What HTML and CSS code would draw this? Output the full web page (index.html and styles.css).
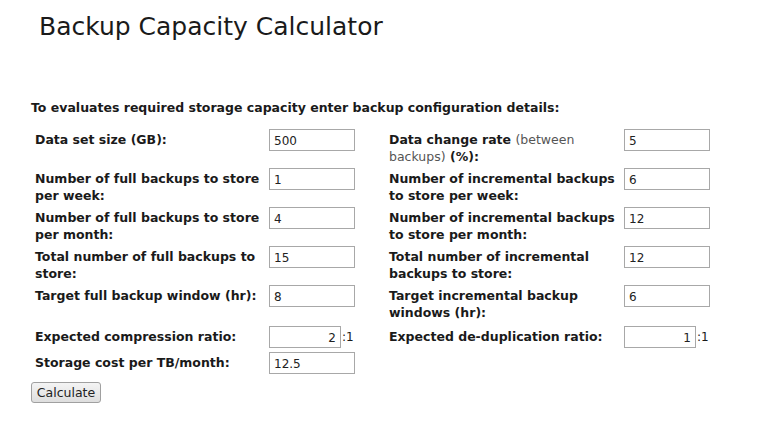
FILE: index.html
```html
<!DOCTYPE html>
<html lang="en">
<head>
    <meta charset="UTF-8">
    <meta name="viewport" content="width=device-width, initial-scale=1.0">
    <title>Backup Capacity Calculator</title>
    <link rel="stylesheet" href="styles.css">
</head>
<body>
    <div class="pagina">
        <h1>Backup Capacity Calculator</h1>
        <p class="intro">To evaluates required storage capacity enter backup configuration details:</p>

        <form class="calcolatore">
            <div class="griglia">
                <label class="etichetta">Data set size (GB):</label>
                <div class="campo"><input type="text" value="500"></div>
                <label class="etichetta">Data change rate <span class="nota">(between backups)</span> (%):</label>
                <div class="campo"><input type="text" value="5"></div>

                <label class="etichetta">Number of full backups to store per week:</label>
                <div class="campo"><input type="text" value="1"></div>
                <label class="etichetta">Number of incremental backups to store per week:</label>
                <div class="campo"><input type="text" value="6"></div>

                <label class="etichetta">Number of full backups to store per month:</label>
                <div class="campo"><input type="text" value="4"></div>
                <label class="etichetta">Number of incremental backups to store per month:</label>
                <div class="campo"><input type="text" value="12"></div>

                <label class="etichetta">Total number of full backups to store:</label>
                <div class="campo"><input type="text" value="15"></div>
                <label class="etichetta">Total number of incremental backups to store:</label>
                <div class="campo"><input type="text" value="12"></div>

                <label class="etichetta">Target full backup window (hr):</label>
                <div class="campo"><input type="text" value="8"></div>
                <label class="etichetta">Target incremental backup windows (hr):</label>
                <div class="campo"><input type="text" value="6"></div>

                <label class="etichetta breve stacco">Expected compression ratio:</label>
                <div class="campo breve stacco"><input type="text" class="rapporto" value="2"><span class="suffisso">:1</span></div>
                <label class="etichetta breve stacco">Expected de-duplication ratio:</label>
                <div class="campo breve stacco"><input type="text" class="rapporto" value="1"><span class="suffisso">:1</span></div>

                <label class="etichetta breve">Storage cost per TB/month:</label>
                <div class="campo breve"><input type="text" value="12.5"></div>
            </div>
            <button type="button" class="pulsante">Calculate</button>
        </form>
    </div>
</body>
</html>
```

FILE: styles.css
```css
body {
    margin: 0;
    background-color: #fff;
    color: #1a1a1a;
    font-family: "DejaVu Sans", Verdana, sans-serif;
}
.pagina {
    padding: 0 0 0 31px;
}
h1 {
    font-size: 25px;
    font-weight: normal;
    line-height: 30px;
    margin: 12px 0 0 8px;
}
.intro {
    font-size: 12.5px;
    font-weight: bold;
    line-height: 18px;
    margin: 57px 0 0 0;
}
.griglia {
    display: grid;
    grid-template-columns: 234px 120px 235px 100px;
    align-items: start;
    margin-top: 10px;
}
.etichetta {
    font-size: 12.5px;
    font-weight: bold;
    line-height: 17px;
    padding: 4px 4px 1px 4px;
    min-height: 34px;
}
.nota {
    font-weight: normal;
    color: #555;
}
.campo {
    padding: 2px 4px 0 4px;
    display: flex;
    align-items: center;
}
.etichetta.breve {
    min-height: 0;
}
.campo.breve {
    padding-bottom: 2px;
}
.stacco {
    margin-top: 2px;
}
.campo input {
    width: 86px;
    height: 22px;
    box-sizing: border-box;
    border: 1px solid #a8a8a8;
    padding: 1px 4px 0 4px;
    font-family: "DejaVu Sans", Verdana, sans-serif;
    font-size: 12px;
    color: #222;
}
.campo input.rapporto {
    width: 72px;
    text-align: right;
}
.suffisso {
    font-size: 12px;
    padding-left: 1px;
}
.pulsante {
    margin-top: 6px;
    width: 70px;
    height: 21px;
    padding: 0;
    font-family: "DejaVu Sans", Verdana, sans-serif;
    font-size: 12.5px;
    color: #222;
    background: linear-gradient(#f4f4f4, #dedede);
    border: 1px solid #a0a0a0;
    border-radius: 3px;
}
```
